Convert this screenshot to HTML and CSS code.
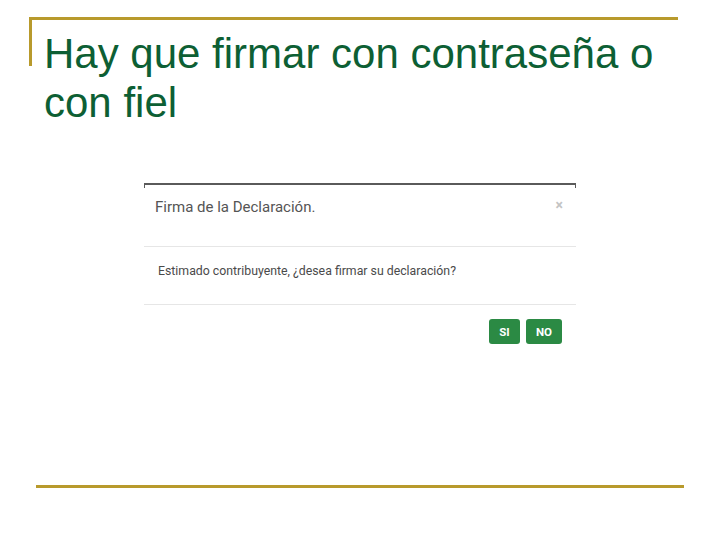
FILE: index.html
```html
<!DOCTYPE html>
<html lang="es">
<head>
<meta charset="utf-8">
<link rel="stylesheet" href="styles.css">
</head>
<body>
<div class="slide">
  <div class="frame">
    <h1 class="title">Hay que firmar con contraseña o con fiel</h1>
  </div>
  <div class="modal">
    <div class="modal-edge"></div>
    <div class="modal-header">
      <span class="modal-title">Firma de la Declaración.</span>
      <span class="close">×</span>
    </div>
    <div class="modal-body">Estimado contribuyente, ¿desea firmar su declaración?</div>
    <div class="modal-footer">
      <button class="btn">SI</button>
      <button class="btn">NO</button>
    </div>
  </div>
  <div class="bottom-rule"></div>
</div>
</body>
</html>
```

FILE: styles.css
```css
html, body {
  margin: 0;
  padding: 0;
  background: #ffffff;
}
.slide {
  width: 720px;
  height: 540px;
  padding-top: 17px;
  box-sizing: border-box;
}
.frame {
  position: relative;
  margin-left: 29px;
  width: 649px;
  border-top: 3px solid #b89a2c;
}
.frame::before {
  content: "";
  position: absolute;
  left: 0;
  top: 0;
  width: 3px;
  height: 46px;
  background: #b89a2c;
}
.title {
  margin: 0;
  padding: 9px 20px 0 15px;
  font-family: "Liberation Sans", Arial, sans-serif;
  font-weight: normal;
  font-size: 42px;
  line-height: 49px;
  color: #0d5f34;
}
.modal {
  margin: 56px 0 0 144px;
  width: 432px;
  font-family: Roboto, "Liberation Sans", sans-serif;
}
.modal-edge {
  height: 3px;
  border: 1px solid #5a5a5a;
  border-bottom: none;
  border-top-width: 2px;
}
.modal-header {
  display: flex;
  justify-content: space-between;
  align-items: flex-start;
  padding: 9px 13px 0 11px;
  height: 59px;
  box-sizing: border-box;
  border-bottom: 1px solid #e6e6e6;
}
.modal-title {
  font-size: 15px;
  color: #555555;
  line-height: 20px;
}
.close {
  font-size: 14px;
  line-height: 16px;
  color: #c4c4c4;
  font-weight: bold;
}
.modal-body {
  padding: 15px 14px 0 14px;
  height: 58px;
  box-sizing: border-box;
  font-size: 12.3px;
  line-height: 18px;
  color: #4a4a4a;
  border-bottom: 1px solid #e6e6e6;
}
.modal-footer {
  display: flex;
  justify-content: flex-end;
  gap: 6px;
  padding: 14px 14px 0 0;
}
.btn {
  height: 25px;
  padding: 0;
  border: none;
  border-radius: 3px;
  background: #2b8a44;
  color: #ffffff;
  font-family: Roboto, "Liberation Sans", sans-serif;
  font-weight: bold;
  font-size: 11.5px;
}
.btn:first-child {
  width: 31px;
}
.btn:last-child {
  width: 36px;
}
.bottom-rule {
  margin: 141px 0 0 36px;
  width: 648px;
  height: 3px;
  background: #b89a2c;
}
```
